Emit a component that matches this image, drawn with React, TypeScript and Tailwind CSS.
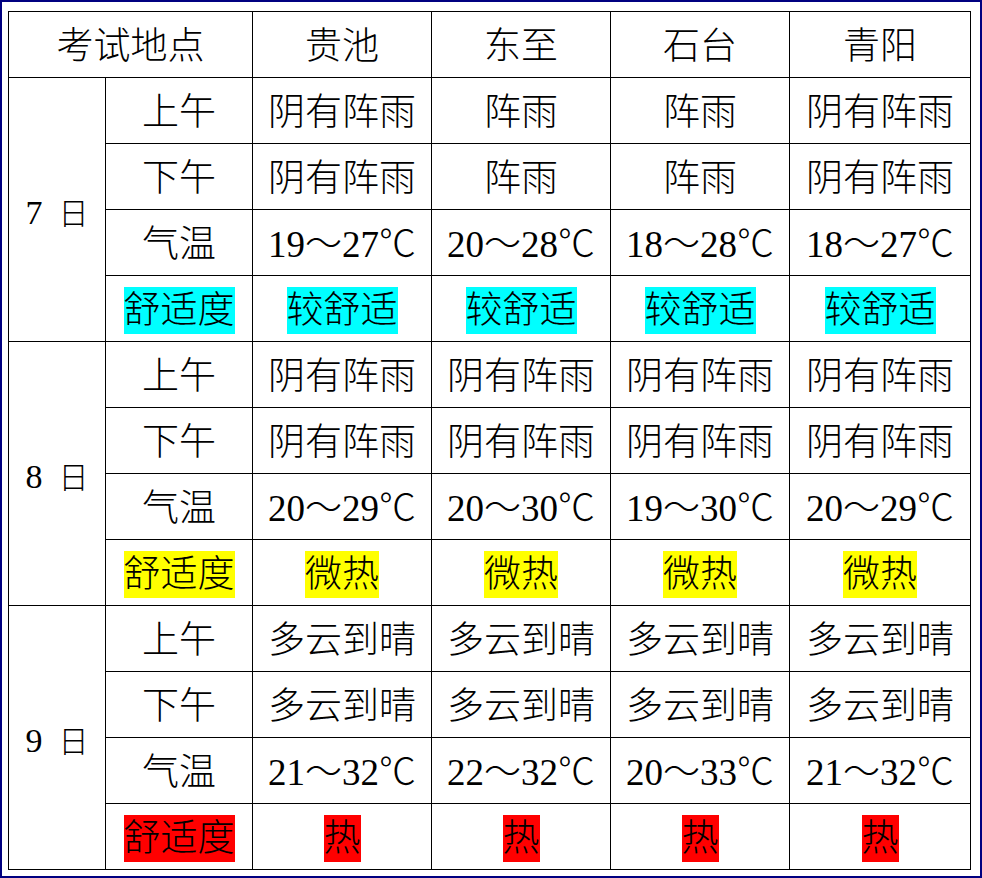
import React from 'react';

type Day = {
  day: string;
  am: string[];
  pm: string[];
  temp: string[];
  comfort: string[];
  color: string;
};

const places = ['贵池', '东至', '石台', '青阳'];

const days: Day[] = [
  {
    day: '7',
    am: ['阴有阵雨', '阵雨', '阵雨', '阴有阵雨'],
    pm: ['阴有阵雨', '阵雨', '阵雨', '阴有阵雨'],
    temp: ['19～27℃', '20～28℃', '18～28℃', '18～27℃'],
    comfort: ['较舒适', '较舒适', '较舒适', '较舒适'],
    color: 'bg-[#00ffff]',
  },
  {
    day: '8',
    am: ['阴有阵雨', '阴有阵雨', '阴有阵雨', '阴有阵雨'],
    pm: ['阴有阵雨', '阴有阵雨', '阴有阵雨', '阴有阵雨'],
    temp: ['20～29℃', '20～30℃', '19～30℃', '20～29℃'],
    comfort: ['微热', '微热', '微热', '微热'],
    color: 'bg-[#ffff00]',
  },
  {
    day: '9',
    am: ['多云到晴', '多云到晴', '多云到晴', '多云到晴'],
    pm: ['多云到晴', '多云到晴', '多云到晴', '多云到晴'],
    temp: ['21～32℃', '22～32℃', '20～33℃', '21～32℃'],
    comfort: ['热', '热', '热', '热'],
    color: 'bg-[#ff0000]',
  },
];

const cell = 'border border-black text-center align-middle h-[66px] p-0 pt-[4px]';

const Mark = ({ text, color }: { text: string; color: string }) => (
  <span className={`${color} inline-block leading-[47px]`}>{text}</span>
);

const App = () => {
  return (
    <div
      className="w-[982px] h-[878px] border-2 border-[#000080] bg-white pl-[6px] pt-[9px] text-black text-[37px] leading-none font-light"
      style={{ fontFamily: '"Liberation Serif", "Noto Sans CJK SC", serif' }}
    >
      <table className="border-collapse table-fixed w-[963px]">
        <colgroup>
          <col className="w-[97px]" />
          <col className="w-[147px]" />
          <col className="w-[179px]" />
          <col className="w-[179px]" />
          <col className="w-[179px]" />
          <col className="w-[181px]" />
        </colgroup>
        <tbody>
          {/* Header */}
          <tr>
            <td colSpan={2} className={cell}>
              考试地点
            </td>
            {places.map((p) => (
              <td key={p} className={cell}>
                {p}
              </td>
            ))}
          </tr>

          {days.map((d) => (
            <React.Fragment key={d.day}>
              <tr>
                <td rowSpan={4} className={cell}>
                  <span className="text-[34px]">{d.day}</span>
                  <span className="ml-[16px] text-[30px]">日</span>
                </td>
                <td className={cell}>上午</td>
                {d.am.map((t, i) => (
                  <td key={i} className={cell}>
                    {t}
                  </td>
                ))}
              </tr>
              <tr>
                <td className={cell}>下午</td>
                {d.pm.map((t, i) => (
                  <td key={i} className={cell}>
                    {t}
                  </td>
                ))}
              </tr>
              <tr>
                <td className={cell}>气温</td>
                {d.temp.map((t, i) => (
                  <td key={i} className={cell}>
                    {t}
                  </td>
                ))}
              </tr>
              <tr>
                <td className={cell}>
                  <Mark text="舒适度" color={d.color} />
                </td>
                {d.comfort.map((t, i) => (
                  <td key={i} className={cell}>
                    <Mark text={t} color={d.color} />
                  </td>
                ))}
              </tr>
            </React.Fragment>
          ))}
        </tbody>
      </table>
    </div>
  );
};

export default App;
